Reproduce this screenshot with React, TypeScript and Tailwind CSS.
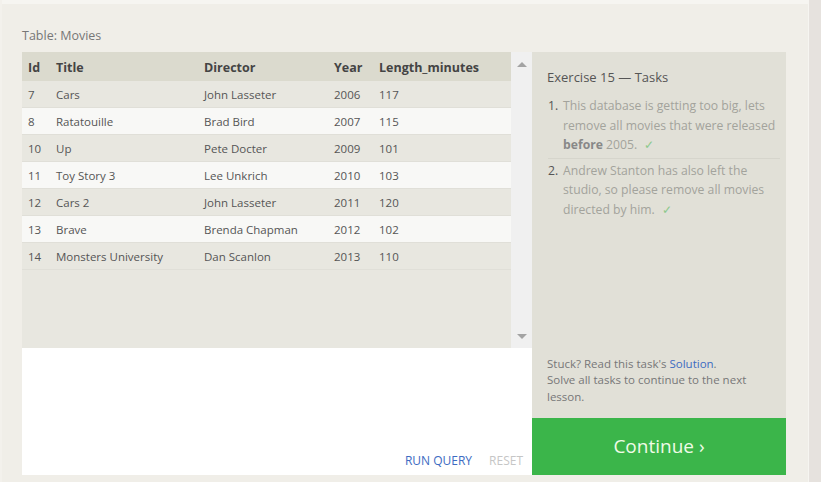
const movies = [
  { id: 7, title: "Cars", director: "John Lasseter", year: 2006, len: 117 },
  { id: 8, title: "Ratatouille", director: "Brad Bird", year: 2007, len: 115 },
  { id: 10, title: "Up", director: "Pete Docter", year: 2009, len: 101 },
  { id: 11, title: "Toy Story 3", director: "Lee Unkrich", year: 2010, len: 103 },
  { id: 12, title: "Cars 2", director: "John Lasseter", year: 2011, len: 120 },
  { id: 13, title: "Brave", director: "Brenda Chapman", year: 2012, len: 102 },
  { id: 14, title: "Monsters University", director: "Dan Scanlon", year: 2013, len: 110 },
];

const cols = "grid grid-cols-[28px_148px_130px_45px_1fr]";

const App = () => {
  return (
    <div className="flex h-[482px] w-[821px] font-['Open_Sans',sans-serif] overflow-hidden">
      <div className="flex-1 flex flex-col bg-[#f0eee8] border-r border-[#f6f5f1] border-l-2 border-l-[#f3f1ec]">
        <div className="h-1 bg-[#f6f5f1]" />
        <div className="pl-[20px] pt-[23px]">
          <p className="text-[12.5px] leading-[18px] text-[#777]">Table: Movies</p>
          <div className="flex mt-[7px] w-[764px]">
            {/* left: results + editor */}
            <div className="w-[510px] flex flex-col">
              <div className="h-[296px] flex bg-[#e8e7e0]">
                <div className="flex-1">
                  <div className={`${cols} h-[29px] pt-[3px] items-center bg-[#dbdace] text-[12.5px] font-bold text-[#444]`}>
                    <span className="pl-[6px]">Id</span>
                    <span className="pl-[6px]">Title</span>
                    <span className="pl-[6px]">Director</span>
                    <span className="pl-[6px]">Year</span>
                    <span className="pl-[6px]">Length_minutes</span>
                  </div>
                  {movies.map((m, i) => (
                    <div
                      key={m.id}
                      className={`${cols} h-[27px] pt-[1px] items-center text-[11.5px] text-[#555] border-b border-[#e0dfd8] ${
                        i % 2 === 0 ? "bg-[#e8e7e0]" : "bg-[#f8f8f6]"
                      }`}
                    >
                      <span className="pl-[6px]">{m.id}</span>
                      <span className="pl-[6px]">{m.title}</span>
                      <span className="pl-[6px]">{m.director}</span>
                      <span className="pl-[6px]">{m.year}</span>
                      <span className="pl-[6px]">{m.len}</span>
                    </div>
                  ))}
                </div>
                <div className="w-[21px] bg-[#f0f0f0] flex flex-col items-center justify-between pt-[10px] pb-[9px]">
                  <div className="w-0 h-0 border-l-[5px] border-r-[5px] border-b-[5px] border-l-transparent border-r-transparent border-b-[#a3a3a3]" />
                  <div className="w-0 h-0 border-l-[5px] border-r-[5px] border-t-[5px] border-l-transparent border-r-transparent border-t-[#a3a3a3]" />
                </div>
              </div>
              <div className="h-[127px] bg-white flex items-end justify-end gap-[17px] pr-[9px] pb-[6px] text-[12px] leading-[16px]">
                <span className="text-[#3d6bc2]">RUN QUERY</span>
                <span className="text-[#c6c6c6]">RESET</span>
              </div>
            </div>
            {/* right: tasks */}
            <div className="flex-1 flex flex-col bg-[#e1e0d7]">
              <div className="flex-1 flex flex-col pl-[15px] pr-[4px] pt-[15px]">
                <h2 className="text-[13px] leading-[20px] text-[#555]">Exercise 15 — Tasks</h2>
                <ol className="mt-[9px] text-[12.2px] leading-[19.5px] text-[#a3a39c]">
                  <li className="flex pb-[3px] border-b border-[#d6d5cc] ml-[1px] mr-[2px]">
                    <span className="w-[15px] shrink-0 text-[#555]">1.</span>
                    <span>
                      This database is getting too big, lets remove all movies that were released{" "}
                      <b className="text-[#888]">before</b> 2005.{" "}
                      <span className="text-[#8cc98c] ml-1">✓</span>
                    </span>
                  </li>
                  <li className="flex pt-[2px] ml-[1px] pr-[12px]">
                    <span className="w-[15px] shrink-0 text-[#555]">2.</span>
                    <span>
                      Andrew Stanton has also left the studio, so please remove all movies directed by him.{" "}
                      <span className="text-[#8cc98c] ml-1">✓</span>
                    </span>
                  </li>
                </ol>
                <div className="mt-auto mb-[13px] pr-[11px] text-[11.5px] leading-[16.5px] text-[#777]">
                  <p>
                    Stuck? Read this task's <span className="text-[#3d6bc2]">Solution</span>.
                  </p>
                  <p>Solve all tasks to continue to the next lesson.</p>
                </div>
              </div>
              <div className="h-[57px] bg-[#3bb54a] flex items-center justify-center text-[19px] text-[#effbe6]">
                Continue ›
              </div>
            </div>
          </div>
        </div>
      </div>
      <div className="w-[12px] bg-[#e6e2de]" />
    </div>
  );
};

export default App;
